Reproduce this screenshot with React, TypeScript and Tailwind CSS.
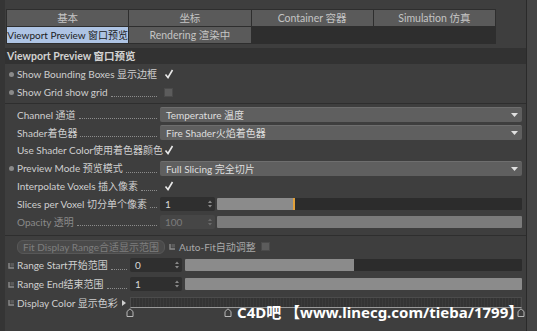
import React from 'react';

const font = { fontFamily: 'Lato, "Noto Sans CJK SC", sans-serif' };

// label with dotted leader, fixed width column
const Label: React.FC<{ text: string; dot?: boolean; key2?: boolean; width: string; dim?: boolean }> = ({
  text,
  dot,
  key2,
  width,
  dim
}) => (
  <div className={`flex items-center h-full shrink-0 ${width}`}>
    <div className="w-[12px] shrink-0 flex items-center justify-center">
      {dot && <span className="w-[5px] h-[5px] rounded-full bg-[#8a8a8a]" />}
      {key2 && <KeyIcon />}
    </div>
    <span className={`whitespace-nowrap shrink-0 ${dim ? 'text-[#8a8a8a]' : 'text-[#cfcfcf]'}`}>{text}</span>
    <span className="flex-1 min-w-0 h-0 translate-y-[4px] mx-[3px] border-b border-dotted border-[#8c8c8c]" />
  </div>
);

const KeyIcon = () => (
  <svg width="7" height="7" viewBox="0 0 7 7">
    <path d="M1 1 V6 H6" stroke="#8c8c8c" strokeWidth="1.4" fill="none" />
    <rect x="2.5" y="1" width="3.5" height="3.5" fill="#5a5a5a" />
  </svg>
);

const Check = () => (
  <svg width="10" height="10" viewBox="0 0 10 10">
    <path d="M1.5 5.5 L4 8.5 L8.5 1" stroke="#e8e8e8" strokeWidth="1.6" fill="none" />
  </svg>
);

const Box = () => <span className="block w-[9px] h-[9px] bg-[#5c5c5c] border border-[#4a4a4a]" />;

const Dropdown: React.FC<{ text: string }> = ({ text }) => (
  <div className="flex-1 h-[15px] bg-[#5f5f5f] border-t border-[#6e6e6e] rounded-[2px] flex items-center justify-between pl-[6px] pr-[4px] text-[#dedede]">
    <span>{text}</span>
    <svg width="7" height="4" viewBox="0 0 7 4">
      <path d="M0 0 H7 L3.5 4 Z" fill="#e0e0e0" />
    </svg>
  </div>
);

const NumField: React.FC<{ value: string; width: string; dim?: boolean }> = ({ value, width, dim }) => (
  <div
    className={`${width} h-[14px] shrink-0 flex items-center justify-between pl-[5px] pr-[3px] rounded-[2px] ${
      dim ? 'bg-[#464646] text-[#7c7c7c]' : 'bg-[#2f2f2f] text-[#d8d8d8]'
    }`}
  >
    <span>{value}</span>
    <svg width="4" height="8" viewBox="0 0 4 8">
      <path d="M0 3 L2 0.5 L4 3 Z M0 5 L2 7.5 L4 5 Z" fill={dim ? '#6a6a6a' : '#8a8a8a'} />
    </svg>
  </div>
);

const Slider: React.FC<{ pct: number; handle?: boolean; dim?: boolean }> = ({ pct, handle, dim }) => (
  <div className="flex-1 h-[12px] bg-[#2c2c2c] rounded-[1px] relative overflow-hidden">
    <div className={`h-full ${dim ? 'bg-[#7b7b7b]' : 'bg-[#8b8b8b]'}`} style={{ width: `${pct}%` }} />
    {handle && (
      <div className="absolute top-0 h-full w-[2px] bg-[#e2a13a]" style={{ left: `${pct}%` }} />
    )}
  </div>
);

const Knob = () => (
  <svg width="8" height="9" viewBox="0 0 8 9">
    <path d="M1 8.5 V3.5 L4 0.8 L7 3.5 V8.5 Z" stroke="#b8b8b8" strokeWidth="1" fill="#3c3c3c" />
  </svg>
);

export default function App() {
  return (
    <div className="w-[537px] h-[331px] bg-[#3e3e3e] flex text-[10px] leading-none overflow-hidden relative" style={font}>
      {/* main panel */}
      <div className="flex-1 flex flex-col border-l-[5px] border-[#353535] pt-[9px] border-r border-r-[#2a2a2a]">
        {/* tabs */}
        <div className="grid grid-cols-4 w-[490px] ml-[1px] bg-[#2e2e2e] gap-px border border-[#2e2e2e]">
          {['基本', '坐标', 'Container 容器', 'Simulation 仿真'].map((t) => (
            <div key={t} className="h-[16px] bg-[#5a5a5a] text-[#c4c4c4] text-[10.5px] flex items-center justify-center whitespace-nowrap">
              {t}
            </div>
          ))}
          <div className="h-[16px] bg-[#aec4e4] text-[#1c1c1c] flex items-center justify-center whitespace-nowrap">
            Viewport Preview 窗口预览
          </div>
          <div className="h-[16px] bg-[#5a5a5a] text-[#c4c4c4] text-[10.5px] flex items-center justify-center whitespace-nowrap">
            Rendering 渲染中
          </div>
        </div>

        {/* section title */}
        <div className="mt-[4px] h-[16px] bg-[#323232] flex items-center pl-[2px] font-bold text-[#d2d2d2] text-[10.5px]">
          Viewport Preview 窗口预览
        </div>

        <div className="flex flex-col pr-[4px]">
          <div className="h-[18px] mt-[1px] flex items-center">
            <Label text="Show Bounding Boxes 显示边框" dot width="w-[155px]" />
            <div className="pl-[4px]"><Check /></div>
          </div>
          <div className="h-[18px] flex items-center">
            <Label text="Show Grid show grid" dot width="w-[155px]" />
            <div className="pl-[4px]"><Box /></div>
          </div>
          <div className="h-px bg-[#2e2e2e] mt-[2px] mb-[2px] -mr-[4px]" />

          <div className="h-[17.8px] flex items-center">
            <Label text="Channel 通道" width="w-[155px]" />
            <div className="flex-1 flex"><Dropdown text="Temperature 温度" /></div>
          </div>
          <div className="h-[17.8px] flex items-center">
            <Label text="Shader着色器" width="w-[155px]" />
            <div className="flex-1 flex"><Dropdown text="Fire Shader火焰着色器" /></div>
          </div>
          <div className="h-[17.8px] flex items-center">
            <Label text="Use Shader Color使用着色器颜色" width="w-[155px]" />
            <div className="pl-[4px]"><Check /></div>
          </div>
          <div className="h-[17.8px] flex items-center">
            <Label text="Preview Mode 预览模式" dot width="w-[155px]" />
            <div className="flex-1 flex"><Dropdown text="Full Slicing 完全切片" /></div>
          </div>
          <div className="h-[17.8px] flex items-center">
            <Label text="Interpolate Voxels 插入像素" width="w-[155px]" />
            <div className="pl-[4px]"><Check /></div>
          </div>
          <div className="h-[17.8px] flex items-center">
            <Label text="Slices per Voxel 切分单个像素" width="w-[155px]" />
            <div className="flex-1 flex items-center gap-[2px]">
              <NumField value="1" width="w-[55px]" />
              <Slider pct={25} handle />
            </div>
          </div>
          <div className="h-[17.8px] flex items-center">
            <Label text="Opacity 透明" width="w-[155px]" dim />
            <div className="flex-1 flex items-center gap-[2px]">
              <NumField value="100" width="w-[55px]" dim />
              <Slider pct={100} dim />
            </div>
          </div>
          <div className="h-px bg-[#2e2e2e] mt-[4px] mb-[2px] -mr-[4px]" />

          <div className="h-[18px] flex items-center pl-[12px]">
            <div className="w-[148px] h-[14px] rounded-[6px] bg-[#4a4a4a] border border-[#575757] text-[#7e7e7e] flex items-center justify-center whitespace-nowrap">
              Fit Display Range合适显示范围
            </div>
            <div className="ml-[4px] flex items-center gap-[3px] text-[#a8a8a8] whitespace-nowrap">
              <KeyIcon />
              <span>Auto-Fit自动调整</span>
              <span className="ml-[2px]"><Box /></span>
            </div>
          </div>
          <div className="h-[19px] flex items-center">
            <Label text="Range Start开始范围" key2 width="w-[125px]" />
            <div className="flex-1 flex items-center gap-[3px]">
              <NumField value="0" width="w-[52px]" />
              <Slider pct={50} />
            </div>
          </div>
          <div className="h-[19px] flex items-center">
            <Label text="Range End结束范围" key2 width="w-[125px]" />
            <div className="flex-1 flex items-center gap-[3px]">
              <NumField value="1" width="w-[52px]" />
              <Slider pct={100} />
            </div>
          </div>
          <div className="h-[18px] flex items-center">
            <div className="w-[12px] flex justify-center"><KeyIcon /></div>
            <span className="text-[#cfcfcf] whitespace-nowrap">Display Color 显示色彩</span>
            <svg width="4" height="6" viewBox="0 0 4 6" className="ml-[4px]">
              <path d="M0 0 L4 3 L0 6 Z" fill="#cfcfcf" />
            </svg>
            <div className="ml-[4px] flex-1 h-[11px] bg-[#343434] border border-[#4c4c4c] border-b-[#9a9a9a] bg-[repeating-linear-gradient(90deg,#343434_0px,#343434_2px,#3b3b3b_2px,#3b3b3b_3px)]" />
          </div>
          <div className="h-[10px] -mt-[4px] relative">
            <div className="absolute left-[121px] top-0"><Knob /></div>
            <div className="absolute left-[219px] top-0"><Knob /></div>
            <div className="absolute left-[512px] top-0"><Knob /></div>
          </div>
        </div>
      </div>

      {/* right strip */}
      <div className="w-[10px] bg-[#454545]" />

      {/* watermark */}
      <div
        className="absolute left-[237px] top-[305px] text-white font-bold text-[15px] whitespace-nowrap"
        style={{ fontFamily: '"Noto Sans", "Noto Sans CJK SC", sans-serif' }}
      >
        C4D吧 【www.linecg.com/tieba/1799】
      </div>
    </div>
  );
}
